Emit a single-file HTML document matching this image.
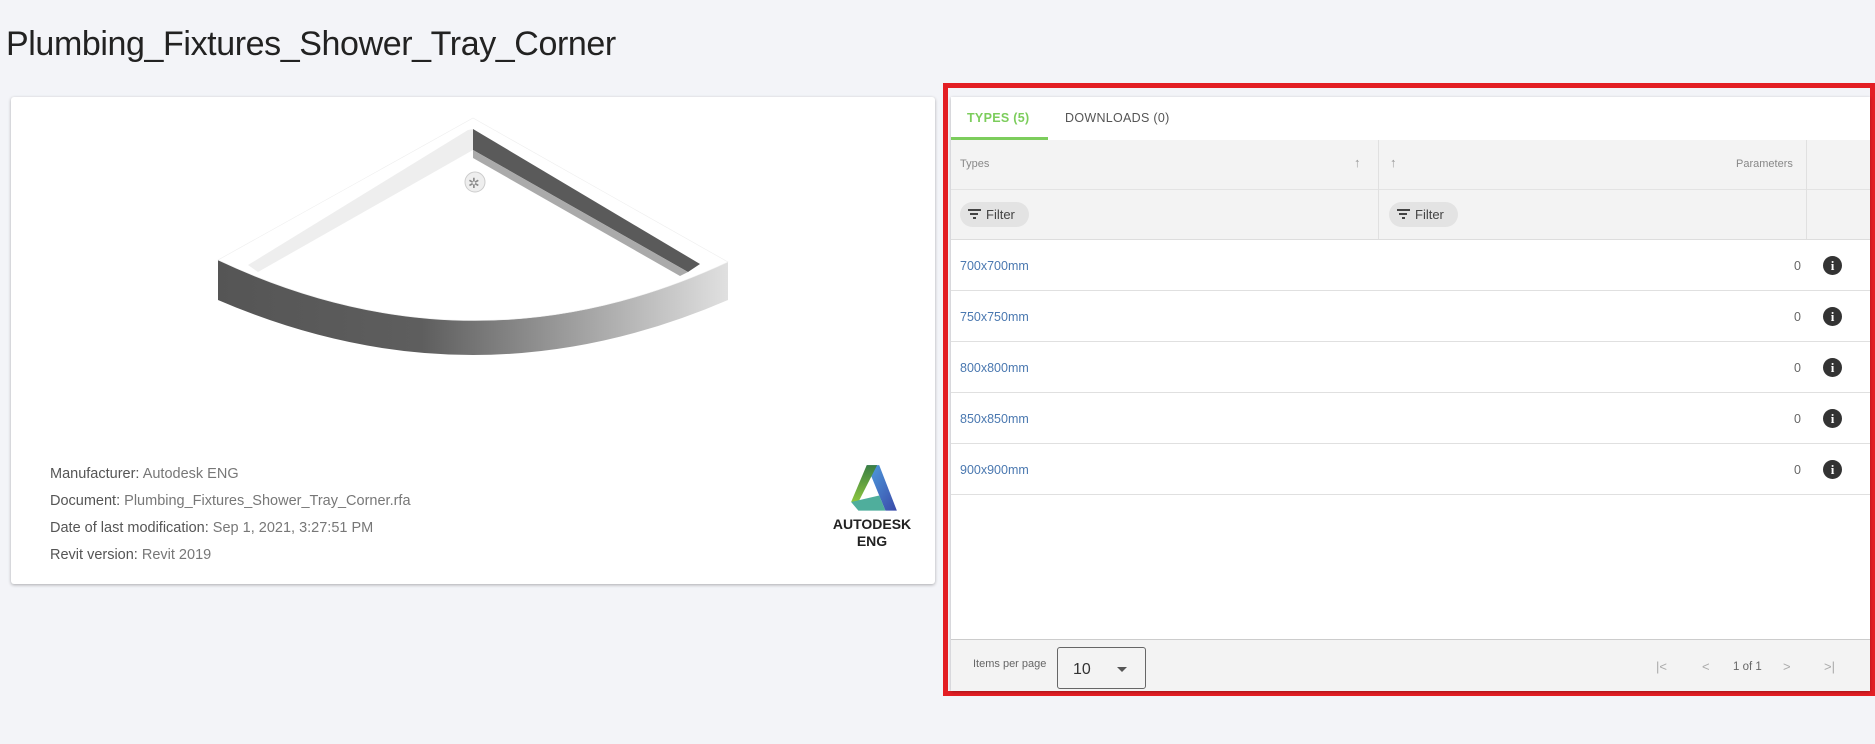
<!DOCTYPE html>
<html><head><meta charset="utf-8"><style>
*{box-sizing:border-box;margin:0;padding:0}
body{width:1875px;height:744px;background:#f3f4f8;font-family:"Liberation Sans",sans-serif;position:relative;overflow:hidden;color:#333}
.abs{position:absolute}
h1{position:absolute;left:6px;top:25px;font-weight:300;font-size:34px;color:#222;letter-spacing:-0.4px;font-family:"Liberation Sans",sans-serif}
.card{position:absolute;background:#fff;box-shadow:0 1px 3px rgba(0,0,0,.3);border-radius:3px}
.info{font-size:14.5px;color:#777;left:50px}
.info b{font-weight:normal;color:#555}
.red{position:absolute;left:943px;top:83px;width:932px;height:613px;border:5px solid #e31e24}
.row{position:absolute;left:951px;width:919px;height:51px;border-bottom:1px solid #e0e0e0;background:#fff}
.row .t{position:absolute;left:9px;top:19px;font-size:12.5px;color:#4a78b0}
.row .z{position:absolute;left:843px;top:19px;font-size:12.5px;color:#666}
.row .i{position:absolute;left:872px;top:16px;width:19px;height:19px;border-radius:50%;background:#333;color:#fff;font:bold 13px "Liberation Serif",serif;text-align:center;line-height:19px}
.chip{position:absolute;height:25px;border-radius:13px;background:#e3e3e3;font-size:13px;color:#444;padding:5px 8px 0 26px}
.chip:before{content:"";position:absolute;left:8px;top:7px;width:13px;height:2px;background:#444}
.chip:after{content:"";position:absolute;left:13px;top:15px;width:3px;height:2px;background:#444}
.chip i{position:absolute;left:10px;top:11px;width:8px;height:2px;background:#444}
.pg{position:absolute;top:659px;font-size:13px;color:#aaa}
</style></head><body>
<h1>Plumbing_Fixtures_Shower_Tray_Corner</h1>

<div class="card" style="left:11px;top:97px;width:924px;height:487px"></div>
<svg class="abs" style="left:0;top:0" width="940" height="600">
<defs>
<linearGradient id="fg" x1="0" x2="1"><stop offset="0" stop-color="#555"/><stop offset=".4" stop-color="#5e5e5e"/><stop offset=".75" stop-color="#aaa"/><stop offset="1" stop-color="#e0e0e0"/></linearGradient>
</defs>
<path d="M218,260 Q473,380 728,262 L728,300 Q473,410 218,300 Z" fill="url(#fg)"/>
<path d="M218,260 L473,118 L728,262 Q473,380 218,260 Z" fill="#fff" stroke="#eee" stroke-width="0.6"/>
<path d="M473,129 L473,150 L688,272 L700,264 Z" fill="#5a5a5a"/>
<path d="M473,150 L688,272 L680,276 L473,158 Z" fill="#aaa"/>
<path d="M468,130 L473,129 L473,150 L258,272 L248,265 Z" fill="#eee"/>
<circle cx="475" cy="182" r="10" fill="#eee" stroke="#ccc"/>
<text x="468" y="188" font-size="14" fill="#888">✲</text>
</svg>
<div class="abs info" style="top:466px">
<div style="height:27px"><b>Manufacturer:</b> Autodesk ENG</div>
<div style="height:27px"><b>Document:</b> Plumbing_Fixtures_Shower_Tray_Corner.rfa</div>
<div style="height:27px"><b>Date of last modification:</b> Sep 1, 2021, 3:27:51 PM</div>
<div style="height:27px"><b>Revit version:</b> Revit 2019</div>
</div>
<svg class="abs" style="left:848px;top:463px" width="52" height="52" viewBox="0 0 50 48" preserveAspectRatio="none">
<defs><linearGradient id="ga" x1="0" y1="1" x2="0" y2="0"><stop offset="0" stop-color="#8cc63e"/><stop offset="1" stop-color="#3a7d44"/></linearGradient>
<linearGradient id="gb" x1="0" y1="0" x2="1" y2="1"><stop offset="0" stop-color="#4f9fe0"/><stop offset="1" stop-color="#3a4aa8"/></linearGradient></defs>
<path d="M18,2 L30,2 L47,44 L36,44 Z" fill="url(#gb)"/>
<path d="M18,2 L28,2 L10,36 L3,36 Z" fill="url(#ga)"/>
<path d="M3,36 L30,30 L36,44 L10,44 Z" fill="#4fae9c"/>
</svg>
<div class="abs" style="left:826px;top:516px;width:92px;text-align:center;font-size:14px;font-weight:bold;color:#222;line-height:17px">AUTODESK<br>ENG</div>

<div class="red"></div>
<div class="card" style="left:951px;top:97px;width:919px;height:594px;border-radius:0"></div>
<div class="abs" style="left:967px;top:111px;font-size:12.5px;color:#7ccd5c;font-weight:bold;letter-spacing:.3px">TYPES (5)</div>
<div class="abs" style="left:1065px;top:111px;font-size:12.5px;color:#555;letter-spacing:.3px">DOWNLOADS (0)</div>
<div class="abs" style="left:951px;top:137px;width:97px;height:3px;background:#7ccd5c"></div>
<div class="abs" style="left:951px;top:140px;width:919px;height:100px;background:#f3f3f3;border-bottom:1px solid #ddd"></div>
<div class="abs" style="left:951px;top:189px;width:919px;height:1px;background:#e3e3e3"></div>
<div class="abs" style="left:1378px;top:140px;width:1px;height:99px;background:#e0e0e0"></div>
<div class="abs" style="left:1806px;top:140px;width:1px;height:99px;background:#e0e0e0"></div>
<div class="abs" style="left:960px;top:158px;font-size:11px;color:#888">Types</div>
<div class="abs" style="left:1354px;top:155px;font-size:13px;color:#999">↑</div>
<div class="abs" style="left:1390px;top:155px;font-size:13px;color:#999">↑</div>
<div class="abs" style="left:1736px;top:158px;font-size:11px;color:#888">Parameters</div>
<div class="chip" style="left:960px;top:202px;width:69px"><i></i>Filter</div>
<div class="chip" style="left:1389px;top:202px;width:69px"><i></i>Filter</div>

<div class="row" style="top:240px"><span class="t">700x700mm</span><span class="z">0</span><span class="i">i</span></div>
<div class="row" style="top:291px"><span class="t">750x750mm</span><span class="z">0</span><span class="i">i</span></div>
<div class="row" style="top:342px"><span class="t">800x800mm</span><span class="z">0</span><span class="i">i</span></div>
<div class="row" style="top:393px"><span class="t">850x850mm</span><span class="z">0</span><span class="i">i</span></div>
<div class="row" style="top:444px"><span class="t">900x900mm</span><span class="z">0</span><span class="i">i</span></div>

<div class="abs" style="left:951px;top:639px;width:919px;height:52px;background:#f3f3f3;border-top:1px solid #ccc"></div>
<div class="abs" style="left:973px;top:658px;font-size:11px;color:#666">Items per page</div>
<div class="abs" style="left:1057px;top:647px;width:89px;height:42px;border:1px solid #666;border-radius:3px;background:#f3f3f3"></div>
<div class="abs" style="left:1073px;top:661px;font-size:16px;color:#333">10</div>
<div class="abs" style="left:1117px;top:667px;width:0;height:0;border-left:5px solid transparent;border-right:5px solid transparent;border-top:5px solid #555"></div>
<div class="pg" style="left:1656px">|&lt;</div>
<div class="pg" style="left:1702px">&lt;</div>
<div class="pg" style="left:1733px;color:#666;font-size:11.5px;top:661px">1 of 1</div>
<div class="pg" style="left:1783px">&gt;</div>
<div class="pg" style="left:1824px">&gt;|</div>
</body></html>
